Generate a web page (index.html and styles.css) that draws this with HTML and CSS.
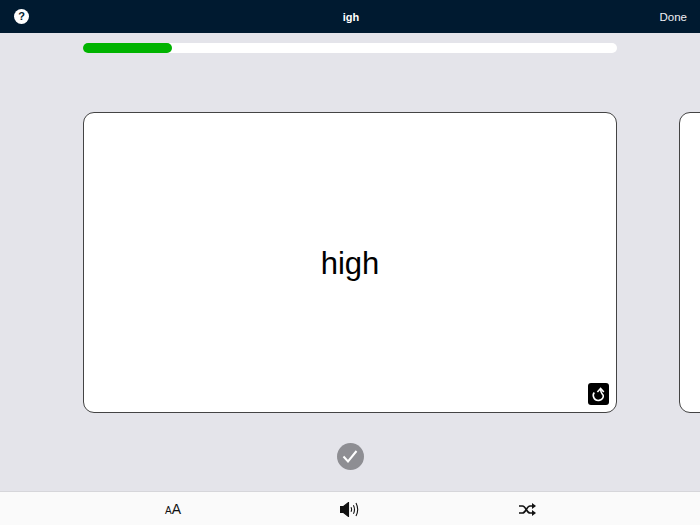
FILE: index.html
```html
<!DOCTYPE html>
<html>
<head>
    <title>Flashcards</title>
    <link rel="stylesheet" href="styles.css">
</head>
<body>
    <div class="header-bar">
        <div class="help">?</div>
        <div class="title">igh</div>
        <div class="done">Done</div>
    </div>

    <div class="main">
        <div class="progress">
            <div class="progress-fill" style="width: 16.7%"></div>
        </div>

        <div class="cards">
            <div class="card">
                <div class="word">high</div>
                <div class="flip">
                    <svg width="21" height="22" viewBox="0 0 21 22" fill="none" stroke="#fff" stroke-width="1.6">
                        <path d="M6.3 9.5 C5 11 5 13 5.8 14.6 C7 17.2 9.5 17.6 11 17.4 C14 17 15.8 14.6 15.2 12.4 C14.8 11 12.6 10.4 12.6 6"/>
                        <path d="M9.4 9 L12.6 5.4 L15.8 9"/>
                    </svg>
                </div>
            </div>
            <div class="card next"></div>
        </div>

        <div class="check">
            <svg width="16" height="13" viewBox="0 0 16 13" fill="none" stroke="#fff" stroke-width="2">
                <path d="M1.5 6.5 L6 11.5 L14.5 1"/>
            </svg>
        </div>
    </div>

    <div class="toolbar">
        <div class="tool"><span class="small-a">A</span><span class="big-a">A</span></div>
        <div class="tool">
            <svg width="20" height="15" viewBox="0 0 20 15" fill="none" stroke="#111" stroke-width="1.1">
                <path d="M0.5 4.5 H3.5 L8.5 0.5 V14.5 L3.5 10.5 H0.5 Z" fill="#111"/>
                <path d="M11 5.2 Q12.2 7.5 11 9.8"/>
                <path d="M13.4 3.2 Q15.6 7.5 13.4 11.8"/>
                <path d="M16 1 Q19.4 7.5 16 14"/>
            </svg>
        </div>
        <div class="tool">
            <svg width="17" height="13" viewBox="0 0 17 13" fill="none" stroke="#111" stroke-width="1.6">
                <path d="M0 3 H3.5 C7 3 7.5 10 11 10 H13.5"/>
                <path d="M0 10 H3.5 C7 10 7.5 3 11 3 H13.5"/>
                <path d="M13 0 L17 3 L13 6 Z" fill="#111" stroke="none"/>
                <path d="M13 7 L17 10 L13 13 Z" fill="#111" stroke="none"/>
            </svg>
        </div>
    </div>
</body>
</html>
```

FILE: styles.css
```css
body {
    font-family: "Liberation Sans", Arial, sans-serif;
    margin: 0;
    padding: 0;
    width: 700px;
    height: 525px;
    overflow: hidden;
    background-color: #e4e4ea;
    display: flex;
    flex-direction: column;
}

/* Top bar */
.header-bar {
    height: 33px;
    flex-shrink: 0;
    box-sizing: border-box;
    background-color: #001a30;
    color: #fff;
    display: grid;
    grid-template-columns: 1fr auto 1fr;
    align-items: center;
    padding: 0 13px 0 14px;
}

.help {
    width: 15px;
    height: 15px;
    border-radius: 50%;
    background-color: #fff;
    color: #001a30;
    font-size: 11px;
    font-weight: bold;
    line-height: 15px;
    text-align: center;
}

.title {
    font-size: 11px;
    font-weight: bold;
    margin-left: 1px;
}

.done {
    font-size: 11.5px;
    color: #f0f0f4;
    text-align: right;
}

.main {
    flex: 1;
    padding: 10px 0 0 83px;
    overflow: hidden;
}

.progress {
    width: 534px;
    height: 10px;
    border-radius: 5px;
    background-color: #fff;
}

.progress-fill {
    height: 100%;
    border-radius: 5px;
    background-color: #00b300;
}

.cards {
    display: flex;
    gap: 62px;
    margin-top: 59px;
}

.card {
    width: 534px;
    height: 301px;
    flex-shrink: 0;
    box-sizing: border-box;
    background-color: #fff;
    border: 1px solid #444;
    border-radius: 11px;
    display: flex;
    align-items: center;
    justify-content: center;
    position: relative;
}

.word {
    font-size: 31px;
    color: #000;
    margin-top: 2px;
}

.flip {
    position: absolute;
    right: 7px;
    bottom: 7px;
    width: 21px;
    height: 22px;
    border-radius: 3px;
    background-color: #000;
}

.flip svg {
    display: block;
}

.check {
    width: 27px;
    height: 27px;
    margin: 30px 0 0 254px;
    border-radius: 50%;
    background-color: #8e8e93;
    display: flex;
    align-items: center;
    justify-content: center;
}

.check svg {
    margin-right: 1px;
}

/* Bottom toolbar */
.toolbar {
    height: 34px;
    flex-shrink: 0;
    box-sizing: border-box;
    background-color: #fafafa;
    border-top: 1px solid #d6d6da;
    display: grid;
    grid-template-columns: repeat(3, 177px);
    justify-content: center;
    padding-top: 1px;
}

.tool {
    display: flex;
    align-items: center;
    justify-content: center;
    color: #111;
}

.small-a {
    font-size: 10px;
    margin-top: 3px;
}

.big-a {
    font-size: 14px;
}
```
